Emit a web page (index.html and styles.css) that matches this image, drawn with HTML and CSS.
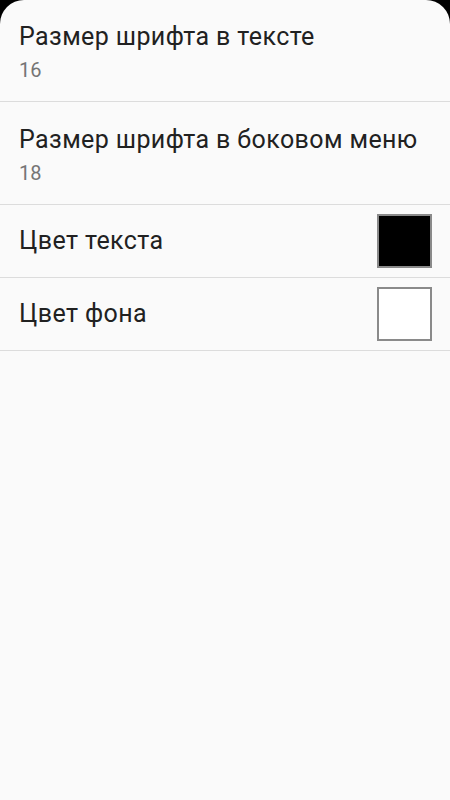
FILE: index.html
```html
<!DOCTYPE html>
<html lang="ru">
<head>
  <meta charset="UTF-8" />
  <title>Настройки</title>
  <link rel="stylesheet" href="styles.css">
</head>
<body>

<div class="screen">
  <div class="pref">
    <div class="pref-title">Размер шрифта в тексте</div>
    <div class="pref-summary">16</div>
  </div>
  <div class="pref">
    <div class="pref-title">Размер шрифта в боковом меню</div>
    <div class="pref-summary">18</div>
  </div>
  <div class="pref pref-color">
    <div class="pref-title">Цвет текста</div>
    <div class="swatch swatch-black"></div>
  </div>
  <div class="pref pref-color">
    <div class="pref-title">Цвет фона</div>
    <div class="swatch swatch-white"></div>
  </div>
</div>

</body>
</html>
```

FILE: styles.css
```css
html, body {
  margin: 0;
  background: #000;
}
body {
  font-family: Roboto, "Noto Sans", sans-serif;
  color: #212121;
}
.screen {
  min-height: 800px;
  background: #fafafa;
  border-radius: 24px 24px 0 0;
  overflow: hidden;
}
.pref {
  padding: 23px 19px 19px;
  border-bottom: 1px solid #dcdcdc;
}
.pref + .pref {
  padding-top: 24px;
}
.pref-title {
  font-size: 25px;
  line-height: 28px;
  letter-spacing: 0.4px;
}
.pref-summary {
  margin-top: 7px;
  font-size: 20px;
  line-height: 24px;
  color: #757575;
}
.pref.pref-color {
  display: flex;
  align-items: center;
  justify-content: space-between;
  padding: 9px 18px 9px 19px;
}
.swatch {
  box-sizing: border-box;
  width: 55px;
  height: 54px;
  border: 2px solid #8a8a8a;
}
.swatch-black { background: #000; }
.swatch-white { background: #fff; }
```
